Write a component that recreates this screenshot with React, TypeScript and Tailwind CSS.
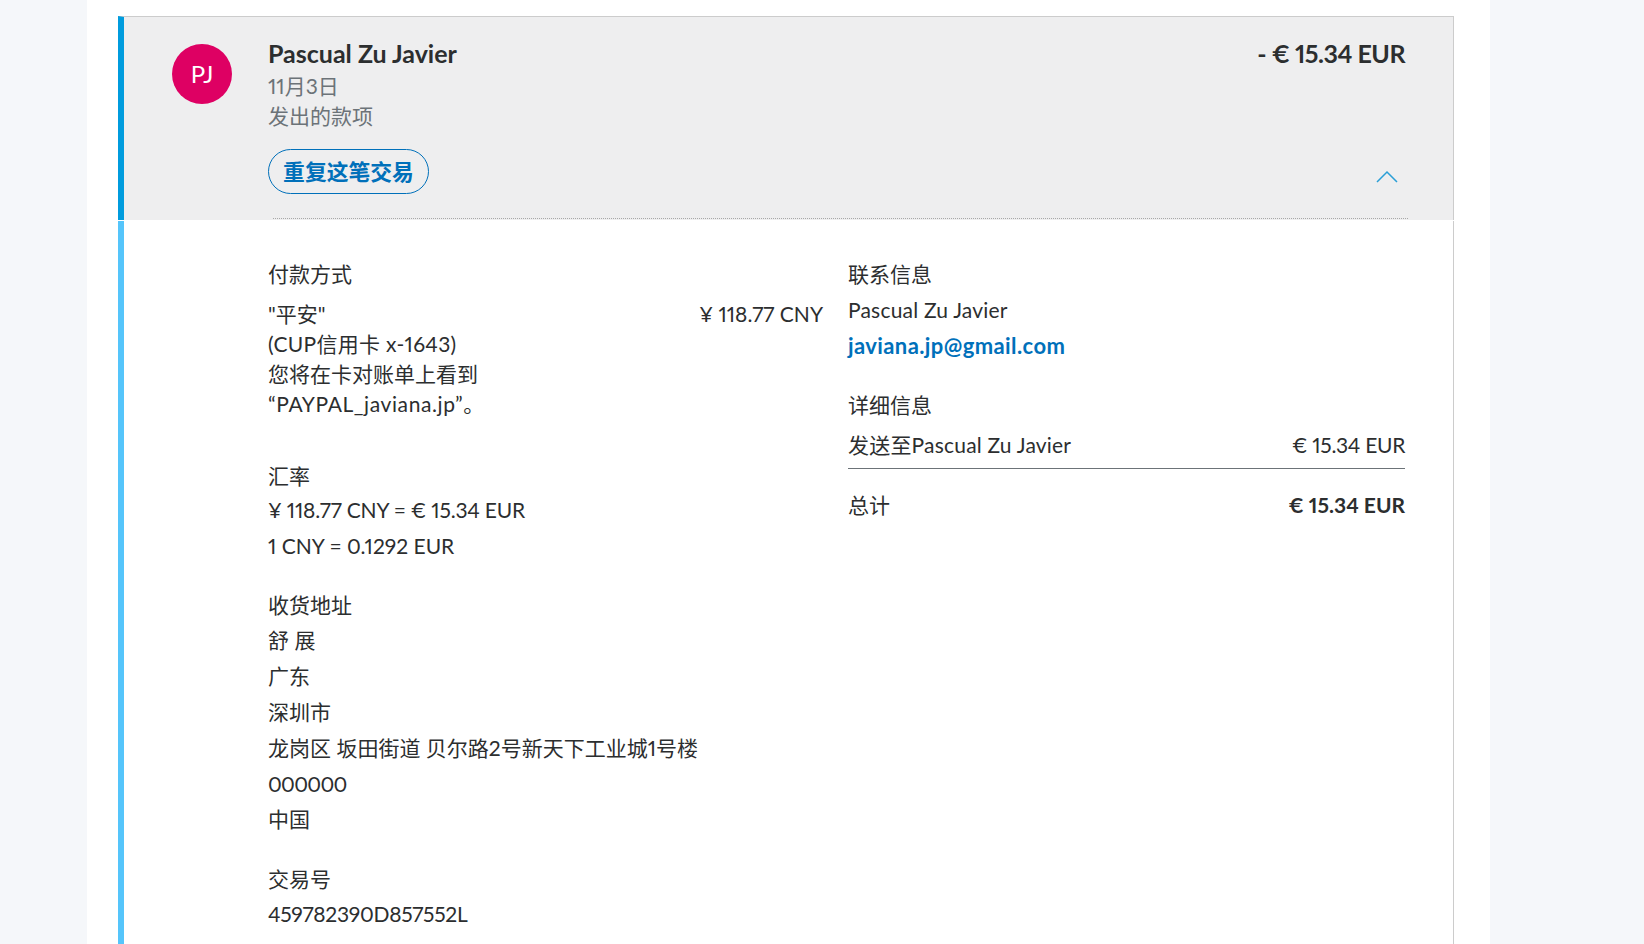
const rows = ["舒 展", "广东", "深圳市", "龙岗区 坂田街道 贝尔路2号新天下工业城1号楼"];

export default function App() {
  return (
    <div className="h-[944px] overflow-hidden bg-[#f5f7fa] pl-[87px] pr-[154px] font-['Lato','Noto_Sans_CJK_SC',sans-serif] text-[21px] leading-[30px] text-[#2c2e2f] proportional-nums">
      <div className="h-full bg-white pl-[31px] pr-[36px] pt-[16px]">
        <div className="flex h-[204px] flex-col border-t border-r border-l-[6px] border-t-[#cccccc] border-r-[#cccccc] border-l-[#009cde] bg-[#eeeeef]">
          <div className="flex flex-1 pl-[48px] pr-[48px]">
            <div className="mt-[27px] flex h-[60px] w-[60px] shrink-0 items-center justify-center rounded-full bg-[#de0063] text-[24px] text-white">
              PJ
            </div>
            <div className="ml-[36px] flex-1">
              <div className="mt-[21px] text-[25px] font-bold leading-[30px]">Pascual Zu Javier</div>
              <div className="mt-[3px] text-[#6c7378]">11月3日</div>
              <div className="text-[#6c7378]">发出的款项</div>
              <button className="mt-[18px] h-[45px] w-[161px] rounded-full border border-[#0070ba] text-center text-[21.8px] font-bold text-[#0070ba]">
                重复这笔交易
              </button>
            </div>
            <div className="flex flex-col items-end">
              <div className="mt-[21px] text-[25px] font-bold leading-[30px] tracking-[-0.5px]">- € 15.34 EUR</div>
              <svg className="mr-[7px] mt-[102px]" width="22" height="13" viewBox="0 0 22 13" fill="none">
                <path d="M1 12 L11 2 L21 12" stroke="#2a9fd6" strokeWidth="1.5" />
              </svg>
            </div>
          </div>
          <div className="ml-[149px] mr-[45px] mb-[1px] border-b border-dotted border-[#a8a8a8]" />
        </div>

        <div className="mt-[1px] flex h-[800px] gap-[25px] border-r border-l-[6px] border-r-[#cccccc] border-l-[#55c5fb] pl-[144px] pr-[48px] pt-[38px]">
          <div className="w-[555px]">
            <div>付款方式</div>
            <div className="mt-[10px] flex justify-between">
              <div>
                <div>"平安"</div>
                <div className="tracking-[0.3px]">(CUP信用卡 x-1643)</div>
                <div>您将在卡对账单上看到</div>
                <div className="tracking-[0.6px]">“PAYPAL_javiana.jp”。</div>
              </div>
              <div>¥ 118.77 CNY</div>
            </div>

            <div className="mt-[42px]">汇率</div>
            <div className="mt-[4px] tracking-[-0.2px]">¥ 118.77 CNY = € 15.34 EUR</div>
            <div className="mt-[6px]">1 CNY = 0.1292 EUR</div>

            <div className="mt-[29px]">收货地址</div>
            <div className="mt-[5px] flex flex-col gap-[5.9px]">
              {rows.map((row) => (
                <div key={row}>{row}</div>
              ))}
              <div className="tracking-[-0.7px]">000000</div>
              <div>中国</div>
            </div>

            <div className="mt-[30px]">交易号</div>
            <div className="mt-[5px] tracking-[-0.3px]">459782390D857552L</div>
          </div>

          <div className="w-[557px]">
            <div>联系信息</div>
            <div className="mt-[6px] tracking-[0.2px]">Pascual Zu Javier</div>
            <div className="mt-[6px] text-[22px] font-bold tracking-[0.4px] text-[#0070ba]">javiana.jp@gmail.com</div>

            <div className="mt-[29px]">详细信息</div>
            <div className="mt-[10px] flex justify-between border-b border-[#6c7378] pb-[8px]">
              <span className="tracking-[0.2px]">发送至Pascual Zu Javier</span>
              <span className="tracking-[-0.3px]">€ 15.34 EUR</span>
            </div>
            <div className="mt-[21px] flex justify-between">
              <span>总计</span>
              <span className="font-bold">€ 15.34 EUR</span>
            </div>
          </div>
        </div>
      </div>
    </div>
  );
}
